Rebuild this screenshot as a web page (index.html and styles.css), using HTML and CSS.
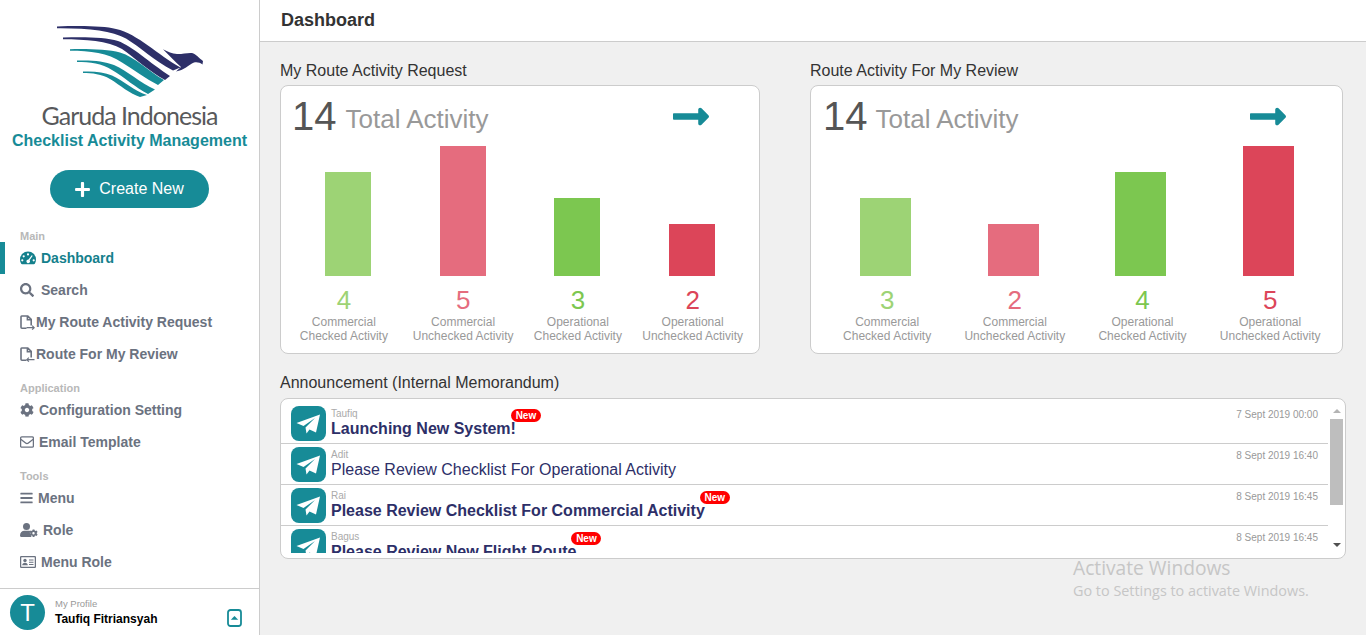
FILE: index.html
```html
<!DOCTYPE html>
<html lang="en">
<head>
<meta charset="utf-8">
<title>Dashboard - Checklist Activity Management</title>
<link rel="stylesheet" href="styles.css">
</head>
<body>
<div class="app">
  <aside class="sidebar">
    <div class="brand">
      <svg class="logo" width="150" height="75" viewBox="55 25 150 75">
        <path class="navy" d="M57 26.500C82 25.500 104 26 116 29C138 34 158 55 180.500 67.500L173 70.500C153 60 140 47 126 38.500C112 30.500 88 28 57 28.200Z"/>
        <path class="navy" d="M63 37.500C85 37 105 37 118 41C132 46 150 63 170 76L165 80C150 72 135 58 122 49C108 41 85 39.300 63 39.300Z"/>
        <path class="teal" d="M70 49.200C90 48.800 108 49.500 120 52.500C135 57 148 71 164 80L158 85C146 79 134 70 122 62.500C108 53 90 50.800 70 50.800Z"/>
        <path class="teal" d="M77 60.500C92 60 104 61 114 65C128 71 140 83 155 89.500L148 94C136 88 124 77 112 70C102 63.500 90 62 77 62Z"/>
        <path class="teal" d="M83 71.500C94 71 104 72 112 75.500C124 81 134 91 147 95L140 97C130 94 120 85 110 79C102 74 92 73 83 73Z"/>
        <path class="navy" d="M163 49.300C168 52 172 53.600 177 54C182 54.200 188 52.500 192 53C196 54 199 58 203 61L202.500 64.500C200 62.500 197 61.800 194 62.500C191 63.500 189 65.500 186 67.500C183 69.500 180 70.500 176 71.500L181 67C175 62 170 56 163 49.300Z"/>
      </svg>
      <div class="wordmark">Garuda Indonesia</div>
      <div class="app-title">Checklist Activity Management</div>
      <a class="create-btn" href="#">
        <svg width="15" height="17" viewBox="0 0 448 512"><path d="M416 208H272V64c0-17.670-14.330-32-32-32h-32c-17.670 0-32 14.330-32 32v144H32c-17.670 0-32 14.330-32 32v32c0 17.670 14.330 32 32 32h144v144c0 17.670 14.330 32 32 32h32c17.670 0 32-14.330 32-32V304h144c17.670 0 32-14.330 32-32v-32c0-17.670-14.330-32-32-32z"/></svg>
        <span>Create New</span>
      </a>
    </div>
    <nav class="nav">
      <div class="nav-label">Main</div>
      <a class="nav-item active" href="#">
        <svg class="nav-icon" width="16" height="14" viewBox="0 0 16 14"><path fill-rule="evenodd" d="M8 .5A8 8 0 0 0 0 8.500c0 1.600.4 3 1.200 4.200.2.300.5.500.9.500h11.800c.4 0 .7-.2.9-.5.8-1.200 1.200-2.600 1.200-4.200a8 8 0 0 0-8-8ZM8 2.300a1.100 1.100 0 1 1 0 2.200 1.100 1.100 0 0 1 0-2.200ZM3.700 4.200a1.100 1.100 0 1 1 0 2.200 1.100 1.100 0 0 1 0-2.200ZM2.300 8.200a1.100 1.100 0 1 1 0 2.200 1.100 1.100 0 0 1 0-2.200ZM13.700 8.200a1.100 1.100 0 1 1 0 2.200 1.100 1.100 0 0 1 0-2.200ZM11.700 4.300l1 .5L9.600 9.200a1.800 1.800 0 1 1-1-.6Z"/></svg>
        <span>Dashboard</span>
      </a>
      <a class="nav-item" href="#">
        <svg class="nav-icon" width="16" height="14" viewBox="0 0 585 512"><path d="M505 442.700L405.300 343c-4.500-4.500-10.600-7-17-7H372c27.600-35.300 44-79.700 44-128C416 93.100 322.900 0 208 0S0 93.100 0 208s93.100 208 208 208c48.300 0 92.700-16.400 128-44v16.300c0 6.400 2.500 12.500 7 17l99.700 99.700c9.400 9.400 24.600 9.400 33.900 0l28.300-28.300c9.400-9.400 9.400-24.600.1-34zM208 336c-70.700 0-128-57.200-128-128 0-70.700 57.200-128 128-128 70.700 0 128 57.200 128 128 0 70.700-57.200 128-128 128z"/></svg>
        <span>Search</span>
      </a>
      <a class="nav-item" href="#">
        <svg class="nav-icon flush" width="16" height="15" viewBox="0 0 16 15"><path class="line thick" d="M6.500 13.200H2c-.6 0-1-.4-1-1V1.700c0-.3.300-.7.700-.7H7.800l3.400 3.400v6M7.400 1v3.800h3.800"/><path d="M6.500 12.100h6.300l-1.100-1.100.9-.7 2.400 2.400-2.400 2.300-.9-.7 1.100-1.100H6.500z"/></svg>
        <span>My Route Activity Request</span>
      </a>
      <a class="nav-item" href="#">
        <svg class="nav-icon flush" width="16" height="15" viewBox="0 0 16 15"><path class="line thick" d="M6.500 13.200H2c-.6 0-1-.4-1-1V1.700c0-.3.300-.7.700-.7H7.800l3.400 3.400v6M7.400 1v3.800h3.800"/><path d="M14.500 12.100H8.200l1.100-1.100-.9-.7-2.400 2.400 2.400 2.300.9-.7-1.100-1.100h6.300z"/></svg>
        <span>Route For My Review</span>
      </a>
      <div class="nav-label spaced">Application</div>
      <a class="nav-item" href="#">
        <svg class="nav-icon" width="14" height="14" viewBox="0 0 512 512"><path d="M487.400 315.700l-42.600-24.600c4.300-23.200 4.300-47 0-70.200l42.600-24.600c4.900-2.800 7.100-8.600 5.500-14-11.100-35.600-30-67.800-54.700-94.600-3.800-4.100-10-5.100-14.800-2.300L380.800 110c-17.900-15.400-38.500-27.300-60.800-35.100V25.800c0-5.600-3.900-10.500-9.400-11.700-36.700-8.200-74.300-7.800-109.200 0-5.500 1.200-9.400 6.100-9.400 11.700V75c-22.200 7.900-42.800 19.800-60.800 35.100L88.700 85.500c-4.900-2.800-11-1.900-14.800 2.300-24.700 26.700-43.600 58.900-54.700 94.600-1.700 5.400.6 11.200 5.500 14L67.300 221c-4.300 23.200-4.300 47 0 70.200l-42.600 24.600c-4.900 2.800-7.100 8.600-5.500 14 11.100 35.600 30 67.800 54.700 94.600 3.800 4.100 10 5.100 14.800 2.300l42.600-24.600c17.900 15.400 38.500 27.300 60.800 35.100v49.200c0 5.600 3.900 10.500 9.400 11.700 36.700 8.200 74.300 7.800 109.200 0 5.500-1.200 9.400-6.100 9.400-11.700v-49.200c22.200-7.900 42.800-19.800 60.800-35.100l42.600 24.600c4.900 2.800 11 1.900 14.800-2.300 24.700-26.700 43.600-58.900 54.700-94.600 1.500-5.500-.7-11.300-5.600-14.100zM256 336c-44.100 0-80-35.900-80-80s35.900-80 80-80 80 35.900 80 80-35.900 80-80 80z"/></svg>
        <span>Configuration Setting</span>
      </a>
      <a class="nav-item" href="#">
        <svg class="nav-icon" width="14" height="12" viewBox="0 0 14 12"><rect class="line" x=".6" y=".8" width="12.800" height="10.400" rx="1.200"/><path class="line" d="M.8 3.200 5.600 7c.8.700 2 .7 2.800 0l4.800-3.800"/></svg>
        <span>Email Template</span>
      </a>
      <div class="nav-label spaced">Tools</div>
      <a class="nav-item" href="#">
        <svg class="nav-icon" width="13" height="14" viewBox="0 0 448 512"><path d="M16 132h416c8.837 0 16-7.163 16-16V76c0-8.837-7.163-16-16-16H16C7.163 60 0 67.163 0 76v40c0 8.837 7.163 16 16 16zm0 160h416c8.837 0 16-7.163 16-16v-40c0-8.837-7.163-16-16-16H16c-8.837 0-16 7.163-16 16v40c0 8.837 7.163 16 16 16zm0 160h416c8.837 0 16-7.163 16-16v-40c0-8.837-7.163-16-16-16H16c-8.837 0-16 7.163-16 16v40c0 8.837 7.163 16 16 16z"/></svg>
        <span>Menu</span>
      </a>
      <a class="nav-item" href="#">
        <svg class="nav-icon" width="18" height="14" viewBox="0 0 18 14"><circle cx="6.500" cy="3.500" r="3.500"/><path d="M0 12.500c0-3 2-4.700 4.500-4.700h4c.6 0 1.100.1 1.600.3-.5 1.700-.1 3.600 1 4.900.2.400.3.800.3 1H1.300C.6 14 0 13.400 0 12.500Z"/><path fill-rule="evenodd" d="M14.400 6.500l.3 1.100.9.400 1-.5 1 1.400-.8.800v1l.8.800-1 1.400-1-.5-.9.400-.3 1.200h-1.700l-.3-1.200-.9-.4-1 .5-1-1.400.8-.8v-1l-.8-.8 1-1.400 1 .5.900-.4.300-1.100ZM13.500 9a1.200 1.200 0 1 0 0 2.400 1.200 1.200 0 0 0 0-2.400Z"/></svg>
        <span>Role</span>
      </a>
      <a class="nav-item" href="#">
        <svg class="nav-icon" width="16" height="12" viewBox="0 0 16 12"><rect class="line" x=".6" y=".6" width="14.800" height="10.800" rx="1"/><circle cx="5" cy="4.500" r="1.700"/><path d="M2.200 9.200c0-1.500 1.200-2.400 2.800-2.400s2.800.9 2.800 2.400ZM9 3.500h4.500v1H9ZM9 5.700h4.500v1H9ZM9 7.900h4.500v1H9Z"/></svg>
        <span>Menu Role</span>
      </a>
    </nav>
    <div class="profile">
      <div class="avatar">T</div>
      <div class="profile-text">
        <div class="profile-cap">My Profile</div>
        <div class="profile-name">Taufiq Fitriansyah</div>
      </div>
      <svg class="profile-toggle" width="15" height="18" viewBox="0 0 15 18"><rect class="line" x="1" y="1" width="13" height="16" rx="2.500"/><path d="M3.800 10.800 7.500 7l3.700 3.800Z"/></svg>
    </div>
  </aside>

  <main class="main">
    <header class="topbar">Dashboard</header>
    <div class="content">
      <section class="chart-grid">
        <div>
          <h2 class="section-title">My Route Activity Request</h2>
          <div class="card chart-card narrow">
            <div class="card-head">
              <span class="total">14</span>
              <span class="total-label">Total Activity</span>
              <svg class="go-arrow" width="36" height="19" viewBox="0 140 448 232"><path d="M313.941 216H12c-6.627 0-12 5.373-12 12v56c0 6.627 5.373 12 12 12h301.941v46.059c0 21.382 25.851 32.090 40.971 16.971l86.059-86.059c9.373-9.373 9.373-24.569 0-33.941l-86.059-86.059c-15.119-15.119-40.971-4.411-40.971 16.971V216z"/></svg>
            </div>
            <div class="bars">
              <div class="bar-col"><div class="bar c1 h4"></div></div>
              <div class="bar-col"><div class="bar c2 h5"></div></div>
              <div class="bar-col"><div class="bar c3 h3"></div></div>
              <div class="bar-col"><div class="bar c4 h2"></div></div>
            </div>
            <div class="legend">
              <div class="stat pull"><div class="stat-num t1">4</div><div>Commercial</div><div>Checked Activity</div></div>
              <div class="stat"><div class="stat-num t2">5</div><div>Commercial</div><div>Unchecked Activity</div></div>
              <div class="stat"><div class="stat-num t3">3</div><div>Operational</div><div>Checked Activity</div></div>
              <div class="stat"><div class="stat-num t4">2</div><div>Operational</div><div>Unchecked Activity</div></div>
            </div>
          </div>
        </div>
        <div>
          <h2 class="section-title">Route Activity For My Review</h2>
          <div class="card chart-card wide">
            <div class="card-head">
              <span class="total">14</span>
              <span class="total-label">Total Activity</span>
              <svg class="go-arrow" width="36" height="19" viewBox="0 140 448 232"><path d="M313.941 216H12c-6.627 0-12 5.373-12 12v56c0 6.627 5.373 12 12 12h301.941v46.059c0 21.382 25.851 32.090 40.971 16.971l86.059-86.059c9.373-9.373 9.373-24.569 0-33.941l-86.059-86.059c-15.119-15.119-40.971-4.411-40.971 16.971V216z"/></svg>
            </div>
            <div class="bars">
              <div class="bar-col"><div class="bar c1 h3"></div></div>
              <div class="bar-col"><div class="bar c2 h2"></div></div>
              <div class="bar-col"><div class="bar c3 h4"></div></div>
              <div class="bar-col"><div class="bar c4 h5"></div></div>
            </div>
            <div class="legend">
              <div class="stat"><div class="stat-num t1">3</div><div>Commercial</div><div>Checked Activity</div></div>
              <div class="stat"><div class="stat-num t2">2</div><div>Commercial</div><div>Unchecked Activity</div></div>
              <div class="stat"><div class="stat-num t3">4</div><div>Operational</div><div>Checked Activity</div></div>
              <div class="stat"><div class="stat-num t4">5</div><div>Operational</div><div>Unchecked Activity</div></div>
            </div>
          </div>
        </div>
      </section>

      <section class="announce">
        <h2 class="section-title">Announcement (Internal Memorandum)</h2>
        <div class="card announce-card">
          <div class="memo-list">
            <article class="memo">
              <div class="memo-icon"><svg width="35" height="35" viewBox="0 0 35 35"><path d="M29 8.500 5.500 17 12.500 20 24 12 14.500 21.500 15.500 27.500 18.500 23.500 25 26.500Z"/></svg></div>
              <div class="memo-body">
                <div class="memo-author">Taufiq</div>
                <div class="memo-title unread"><span>Launching New System!</span><span class="badge">New</span></div>
              </div>
              <time class="memo-date">7 Sept 2019 00:00</time>
            </article>
            <article class="memo">
              <div class="memo-icon"><svg width="35" height="35" viewBox="0 0 35 35"><path d="M29 8.500 5.500 17 12.500 20 24 12 14.500 21.500 15.500 27.500 18.500 23.500 25 26.500Z"/></svg></div>
              <div class="memo-body">
                <div class="memo-author">Adit</div>
                <div class="memo-title"><span>Please Review Checklist For Operational Activity</span></div>
              </div>
              <time class="memo-date">8 Sept 2019 16:40</time>
            </article>
            <article class="memo">
              <div class="memo-icon"><svg width="35" height="35" viewBox="0 0 35 35"><path d="M29 8.500 5.500 17 12.500 20 24 12 14.500 21.500 15.500 27.500 18.500 23.500 25 26.500Z"/></svg></div>
              <div class="memo-body">
                <div class="memo-author">Rai</div>
                <div class="memo-title unread"><span>Please Review Checklist For Commercial Activity</span><span class="badge">New</span></div>
              </div>
              <time class="memo-date">8 Sept 2019 16:45</time>
            </article>
            <article class="memo">
              <div class="memo-icon"><svg width="35" height="35" viewBox="0 0 35 35"><path d="M29 8.500 5.500 17 12.500 20 24 12 14.500 21.500 15.500 27.500 18.500 23.500 25 26.500Z"/></svg></div>
              <div class="memo-body">
                <div class="memo-author">Bagus</div>
                <div class="memo-title unread"><span>Please Review New Flight Route</span><span class="badge">New</span></div>
              </div>
              <time class="memo-date">8 Sept 2019 16:45</time>
            </article>
          </div>
          <div class="scrollbar">
            <div class="scroll-up"></div>
            <div class="scroll-thumb"></div>
            <div class="scroll-down"></div>
          </div>
        </div>
      </section>
    </div>
    <div class="watermark">
      <div class="wm-title">Activate Windows</div>
      <div class="wm-sub">Go to Settings to activate Windows.</div>
    </div>
  </main>
</div>
</body>
</html>
```
FILE: styles.css
```css
* { box-sizing: border-box; }
html, body { margin: 0; height: 100%; overflow: hidden; }
body { font-family: "Liberation Sans", Arial, sans-serif; color: #333; background: #f0f0f0; }
a { text-decoration: none; color: inherit; }
h2 { margin: 0; font-weight: 400; }

.app { display: flex; height: 635px; }

.sidebar { width: 260px; flex: none; background: #fff; border-right: 1px solid #ccc; display: flex; flex-direction: column; }
.brand { display: flex; flex-direction: column; align-items: center; padding-top: 25px; }
.logo { display: block; margin-bottom: 2px; }
.navy { fill: #2d2f68; }
.teal { fill: #178b97; }
.wordmark { font-family: Lato, sans-serif; font-size: 25px; line-height: 27px; color: #58595b; letter-spacing: -1px; white-space: nowrap; }
.app-title { margin-top: 2px; font-size: 16px; font-weight: 700; line-height: 20px; color: #178b97; white-space: nowrap; }
.create-btn { margin-top: 19px; width: 159px; height: 38px; border-radius: 19px; background: #178b97; color: #fff; font-size: 16px; display: flex; align-items: center; justify-content: center; gap: 9px; }
.create-btn svg { fill: #fff; }

.nav { margin-top: 20px; display: flex; flex-direction: column; }
.nav-label { height: 14px; line-height: 16px; padding-left: 20px; font-size: 11px; font-weight: 700; color: #b8b8b8; }
.nav-label.spaced { margin-top: 10px; }
.nav-item { height: 32px; display: flex; align-items: center; padding-left: 20px; font-size: 14px; font-weight: 700; color: #6b7280; }
.nav-item svg { fill: currentColor; }
.nav-icon { flex: none; margin-right: 5px; }
.nav-icon.flush { margin-right: 0; }
.nav-item.active { color: #14808c; box-shadow: inset 5px 0 0 #178b97; }
.line { fill: none; stroke: currentColor; stroke-width: 1.300; }
.line.thick { stroke-width: 1.600; }

.profile { margin-top: auto; height: 47px; border-top: 1px solid #ccc; display: flex; align-items: center; padding: 0 17px 0 10px; }
.avatar { width: 35px; height: 35px; border-radius: 50%; background: #178b97; color: #fff; font-size: 24px; line-height: 35px; text-align: center; flex: none; }
.profile-text { margin-left: 10px; flex: 1; }
.profile-cap { font-size: 9.500px; line-height: 13px; color: #999; margin-bottom: 2px; margin-top: -2px; }
.profile-name { font-size: 12px; font-weight: 700; line-height: 14px; color: #000; }
.profile-toggle { flex: none; margin-top: 12px; color: #178b97; fill: #178b97; }
.profile-toggle .line { stroke-width: 1.800; }

.main { flex: 1; min-width: 0; position: relative; }
.topbar { height: 42px; background: #fff; border-bottom: 1px solid #ccc; padding-left: 21px; font-size: 18px; font-weight: 700; line-height: 40px; color: #333; }
.content { padding: 19px 0 0 20px; }
.chart-grid { display: grid; grid-template-columns: 480px 533px; column-gap: 50px; }
.section-title { font-size: 16px; line-height: 20px; color: #333; margin-bottom: 4px; }
.card { background: #fff; border: 1px solid #ccc; border-radius: 8px; }

.chart-card { height: 269px; }
.card-head { height: 60px; padding: 7px 0 0 11px; display: flex; align-items: flex-start; }
.wide .card-head { padding-left: 12px; }
.total { font-size: 40px; line-height: 46px; color: #555; }
.total-label { font-size: 26px; line-height: 30px; color: #999; margin: 11px 0 0 9px; }
.wide .total-label { margin-left: 8px; }
.go-arrow { fill: #178b97; margin-left: auto; margin-top: 14px; }
.narrow .go-arrow { margin-right: 50px; }
.wide .go-arrow { margin-right: 56px; }

.bars, .legend { display: grid; grid-template-columns: repeat(4, 1fr); }
.narrow .bars { padding: 0 10px; }
.narrow .legend { padding: 0 9px 0 10px; }
.wide .bars { padding: 0 9.500px 0 10.700px; }
.wide .legend { padding: 0 8px 0 12.300px; }
.bars { height: 130px; }
.bar-col { display: flex; justify-content: center; align-items: flex-end; }
.narrow .bar { width: 46px; }
.wide .bar { width: 51px; }
.h2 { height: 52px; }
.h3 { height: 78px; }
.h4 { height: 104px; }
.h5 { height: 130px; }
.c1 { background: #9dd375; }
.c2 { background: #e56c7e; }
.c3 { background: #7cc750; }
.c4 { background: #dc4559; }

.stat { text-align: center; font-size: 12px; line-height: 14px; color: #999; white-space: nowrap; }
.stat.pull { margin-left: -9px; }
.stat-num { font-size: 26px; line-height: 30px; margin-top: 9px; }
.t1 { color: #9dd375; }
.t2 { color: #e56c7e; }
.t3 { color: #7cc750; }
.t4 { color: #dc4559; }

.announce { margin-top: 19px; width: 1066px; }
.announce .section-title { margin-bottom: 5px; }
.announce-card { height: 161px; display: flex; padding: 4px 2px 5px 0; }
.memo-list { flex: 1; min-width: 0; overflow: hidden; }
.memo { height: 41px; display: flex; padding: 3px 10px 0 10px; border-bottom: 1px solid #ccc; flex: none; }
.memo:last-child { border-bottom: 0; }
.memo-icon { width: 35px; height: 35px; border-radius: 8px; background: #178b97; flex: none; }
.memo-icon svg { fill: #fff; display: block; }
.memo-body { margin-left: 5px; flex: 1; min-width: 0; }
.memo-author { font-size: 10px; line-height: 10px; color: #aaa; margin-top: 3px; }
.memo-title { font-size: 16px; line-height: 20px; color: #2d2f68; display: flex; white-space: nowrap; }
.memo-title.unread { font-weight: 700; }
.badge { align-self: flex-start; margin: -10px 0 0 -5px; height: 13px; width: 30px; border-radius: 7px; background: #f00; color: #fff; font-size: 10px; font-weight: 700; line-height: 13px; text-align: center; }
.memo-date { font-size: 10px; line-height: 12px; margin-top: 3px; color: #999; flex: none; }

.scrollbar { width: 13px; margin-left: 2px; display: flex; flex-direction: column; align-items: center; flex: none; }
.scroll-up, .scroll-down { width: 0; height: 0; border-left: 4px solid transparent; border-right: 4px solid transparent; }
.scroll-up { border-bottom: 4px solid #b4b4b4; margin: 6px 0 6px; }
.scroll-thumb { width: 13px; height: 86px; background: #bebebe; }
.scroll-down { border-top: 4px solid #505050; margin-top: auto; margin-bottom: 6px; }

.watermark { position: absolute; left: 813px; top: 556px; font-family: "Open Sans", sans-serif; color: #c6c6c6; white-space: nowrap; }
.wm-title { font-size: 19.200px; line-height: 24px; }
.wm-sub { font-size: 14.400px; line-height: 22px; }
```
